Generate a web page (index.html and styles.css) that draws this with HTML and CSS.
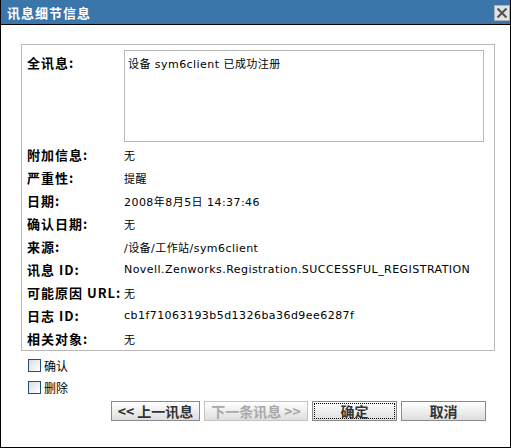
FILE: index.html
```html
<!DOCTYPE html>
<html>
<head>
  <meta charset="utf-8">
  <title>讯息细节信息</title>
  <link rel="stylesheet" href="styles.css">
</head>
<body>
  <div class="dialog">
    <div class="title-bar">
      <span class="title">讯息细节信息</span>
      <span class="close-btn">
        <svg width="12" height="12" viewBox="0 0 12 12">
          <path d="M1.5 1.5 L10.5 10.5 M10.5 1.5 L1.5 10.5" stroke="#555" stroke-width="2.2" fill="none"/>
        </svg>
      </span>
    </div>

    <div class="content">
      <div class="details">
        <div class="row row-full">
          <div class="label">全讯息:</div>
          <div class="message-box">设备 sym6client 已成功注册</div>
        </div>
        <div class="row"><div class="label">附加信息:</div><div class="value">无</div></div>
        <div class="row"><div class="label">严重性:</div><div class="value">提醒</div></div>
        <div class="row"><div class="label">日期:</div><div class="value">2008年8月5日 14:37:46</div></div>
        <div class="row"><div class="label">确认日期:</div><div class="value">无</div></div>
        <div class="row"><div class="label">来源:</div><div class="value">/设备/工作站/sym6client</div></div>
        <div class="row"><div class="label">讯息 ID:</div><div class="value">Novell.Zenworks.Registration.SUCCESSFUL_REGISTRATION</div></div>
        <div class="row"><div class="label">可能原因 URL:</div><div class="value">无</div></div>
        <div class="row"><div class="label">日志 ID:</div><div class="value">cb1f71063193b5d1326ba36d9ee6287f</div></div>
        <div class="row"><div class="label">相关对象:</div><div class="value">无</div></div>
      </div>

      <div class="options">
        <label class="check"><span class="box"></span>确认</label>
        <label class="check"><span class="box"></span>删除</label>
      </div>

      <div class="buttons">
        <button class="btn btn-prev">&lt;&lt; 上一讯息</button>
        <button class="btn btn-next" disabled>下一条讯息 &gt;&gt;</button>
        <button class="btn btn-ok"><span class="focus">确定</span></button>
        <button class="btn btn-cancel">取消</button>
      </div>
    </div>
  </div>
</body>
</html>
```

FILE: styles.css
```css
body {
  margin: 0;
  font-family: Tahoma, "DejaVu Sans", "Noto Sans CJK SC", sans-serif;
  font-size: 12px;
  color: #000;
  background: #fff;
}

.dialog {
  width: 511px;
  height: 448px;
  box-sizing: border-box;
  border: 1px solid #000;
  border-top: none;
  background: #fff;
}

.title-bar {
  height: 24px;
  background: #3a76aa;
  border-bottom: 1px solid #000;
  display: flex;
  align-items: center;
  justify-content: space-between;
  padding: 0 0 0 6px;
}

.title {
  color: #fff;
  font-family: "Noto Sans CJK SC", sans-serif;
  font-weight: bold;
  font-size: 13px;
  letter-spacing: 1px;
}

.close-btn {
  width: 14px;
  height: 14px;
  margin-top: 2px;
  border: 1px solid #b0b0b0;
  background: #e4e4e4;
  display: flex;
  align-items: center;
  justify-content: center;
}

.content {
  padding: 19px 0 0 20px;
}

.details {
  width: 467px;
  border: 1px solid #b9b9b9;
  padding: 5px 0 0 5px;
}

.row {
  display: flex;
  height: 23px;
  align-items: center;
}

.row-full {
  height: 90px;
  align-items: flex-start;
  margin-bottom: 3px;
}

.row-full .label {
  padding-top: 3px;
}

.label {
  width: 97px;
  flex: none;
  font-family: "Noto Sans CJK SC", sans-serif;
  font-weight: bold;
  font-size: 13px;
  letter-spacing: 1px;
  white-space: nowrap;
}

.value {
  font-size: 11px;
  letter-spacing: 0.45px;
  white-space: nowrap;
}

.message-box {
  width: 352px;
  height: 82px;
  border: 1px solid #b9b9b9;
  padding: 4px 3px;
  font-size: 11px;
  letter-spacing: 0.45px;
}

.options {
  padding: 7px 0 0 7px;
  display: flex;
  flex-direction: column;
  gap: 8px;
}

.check {
  display: flex;
  align-items: center;
  gap: 3px;
  font-family: "Noto Sans CJK SC", sans-serif;
  font-size: 12px;
  height: 14px;
}

.box {
  width: 11px;
  height: 11px;
  border: 1px solid #1c5180;
  background: linear-gradient(135deg, #dcdcdc, #ffffff);
}

.buttons {
  display: flex;
  justify-content: flex-end;
  gap: 4px;
  padding: 7px 24px 0 0;
}

.btn {
  height: 20px;
  border: 1px solid #8a8a8a;
  background: linear-gradient(#ffffff, #dedede);
  font-family: "Noto Sans CJK SC", sans-serif;
  font-weight: bold;
  font-size: 14px;
  color: #333;
  padding: 0;
  display: flex;
  align-items: center;
  justify-content: center;
}

.btn-prev { width: 89px; }
.btn-next { width: 104px; color: #a8a8a8; border-color: #c4c4c4; }
.btn-ok { width: 85px; padding: 1px; }
.btn-cancel { width: 85px; }

.focus {
  flex: 1;
  align-self: stretch;
  border: 1px dotted #000;
  display: flex;
  align-items: center;
  justify-content: center;
}
```
